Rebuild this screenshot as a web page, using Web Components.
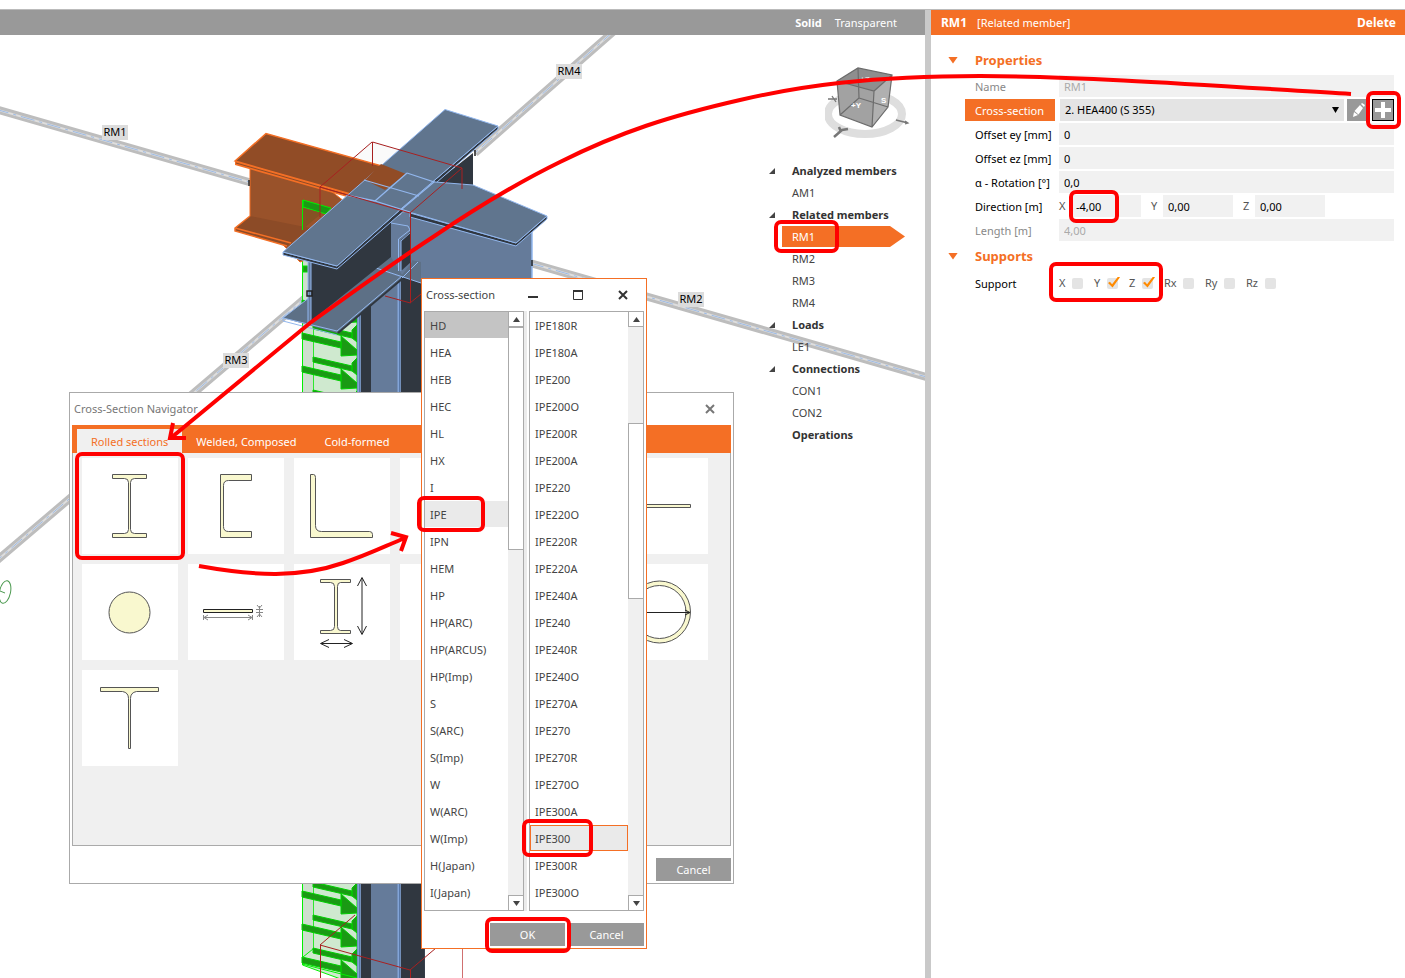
<!DOCTYPE html>
<html lang="en">
<head>
<meta charset="utf-8">
<title>Connection designer</title>
<style>
html,body{height:100%}
body{margin:0;background:#fff;color:#444;font:11px/16px "Noto Sans","Open Sans",sans-serif}
</style>
</head>
<body>
<app-shell></app-shell>

<template id="t-app-shell">
<style>
:host{display:flex;flex-direction:column;min-height:100vh;box-sizing:border-box;padding-top:9px;position:relative;overflow:hidden}
.columns{flex:1;display:grid;grid-template-columns:minmax(0,1fr) 474px;border-top:1px solid #bbb}
.left{display:flex;flex-direction:column;border-right:6px solid #c9c9c9;min-width:0}
.stage{flex:1;position:relative;overflow:hidden}
.side{position:absolute;top:25px;right:14px;display:flex;flex-direction:column;align-items:flex-end;gap:20px}
scene-view{position:absolute;inset:0}
.nav{position:absolute;left:69px;top:357px}
.pick{position:absolute;left:421px;top:243px}
mark-layer{position:absolute;inset:0}
</style>
<div class="columns">
  <main class="left">
    <view-bar></view-bar>
    <div class="stage">
      <scene-view></scene-view>
      <div class="side"><view-cube></view-cube><member-tree></member-tree></div>
      <section-navigator class="nav"></section-navigator>
      <section-picker class="pick"></section-picker>
    </div>
  </main>
  <property-panel></property-panel>
</div>
<mark-layer></mark-layer>
</template>

<template id="t-view-bar">
<style>
:host{display:flex;align-items:center;justify-content:flex-end;gap:13px;height:25px;padding-right:28px;background:#999}
button{all:unset;color:#fff;font-size:11px;line-height:16px}
.on{font-weight:700}
</style>
<button class="on">Solid</button><button>Transparent</button>
</template>

<template id="t-scene-view">
<style>
:host{display:block;overflow:hidden}
svg{display:block;width:100%;height:100%}
span{position:absolute;width:26px;height:15px;background:#dcdcdc;color:#000;line-height:14px;text-align:center;font-size:11px}
</style>
<svg aria-hidden="true"><defs>
  <g id="load" stroke="#00d000" stroke-width="1">
    <path fill="#1a9a14" d="M313 357l39 9v5l-39-9zM352 363l5-5v17l-5-4z"/>
    <path fill="#1a9a14" d="M302 333l39 9v6l-39-9zM341 336l16 14v5l-16 1z"/>
  </g>
</defs>
<g transform="translate(0,-35)">
  <g stroke="#bdbdbd" stroke-width="8" fill="none">
    <path d="M-5 109L249 182M614 31L475 153M530 263L930 378M310 294L-5 562"/>
    <path stroke="#dedede" stroke-width="2" d="M-5 109L249 182M614 31L475 153M530 263L930 378M310 294L-5 562"/>
    <path stroke="#9dbbe6" stroke-width="1" stroke-dasharray="14 5 3 5" d="M-5 109L249 182M614 31L475 153M530 263L930 378M310 294L-5 562"/>
  </g>
  <path fill="#fafafa" d="M372 142L462 168V190L410 213 320 187z"/>
  <path fill="#cfe9cf" stroke="#00f000" d="M302.500 200L346 212 357 300V985L302.500 965z"/>
  <path fill="#cddfcd" d="M303 201h10v748l-10 8z"/><path stroke="#2ee82e" d="M313.500 300V949"/>
  <path fill="#1a9a14" stroke="#00e000" d="M303 266h6v6h-6z"/>
  <use href="#load"/><use href="#load" y="-33"/><use href="#load" y="33"/><use href="#load" y="525"/><use href="#load" y="558"/><use href="#load" y="591"/><use href="#load" y="624"/>
  <path fill="none" stroke="#00f000" d="M303 957l10-8M302 964l55 14"/>

  <path fill="#99522a" stroke="#f46f25" stroke-width="1" d="M250 168L330 190 380 230 300 262 283 245 250 216z"/>
  <path fill="#8c4b27" d="M250 216L235 228V231L287 246 310 228z"/>
  <path fill="none" stroke="#f46f25" stroke-width="1.500" d="M250 216L235 228V231L287 246M235 228L291 243"/>
  <path fill="#1a9a14" stroke="#00f000" d="M303 200L331 208 326 214 303 207z"/>
  <path fill="#855224" d="M303 208L322 213 303 229z"/><path stroke="#00f000" d="M302.500 200V230"/>
  <path fill="#f46f25" d="M235 161V165L375 205V201z"/>
  <path fill="#914c26" stroke="#f46f25" stroke-width="1.500" d="M235 161L266 133.500 407 173 375 201z"/>
  <path fill="none" stroke="#8c4b27" d="M236 163L372 202"/>

  <path fill="#303740" d="M435 183L473 153V186L466 190 410 230z"/>
  <path fill="#657b9a" d="M402 212L532 228V300H376V262z"/>
  <path stroke="#92b7ee" stroke-width="1.500" d="M532 228V300"/>
  <path fill="#657b9a" d="M357 310L371 295H425V985H357z"/>
  <path fill="#303740" d="M361 300h10v685h-10zM401 276l20 7 4 702h-24z"/>
  <path stroke="#82a4d8" stroke-width="3" d="M359 315V985M399 280V985"/><path stroke="#5878a8" d="M359.500 315V985M399.500 280V985"/>
  <path fill="#5d7086" d="M283 318L310 297 376 268 402 278 337 333z"/>
  <path fill="#5d7086" d="M376 268L391 256 421 262V283z"/>
  <path stroke="#92b7ee" fill="none" d="M376 268L421 283M402 278L418 262M310 297L283 318 337 331 402 276"/>
  <path stroke="#303740" stroke-width="2" d="M338 333L402 279"/>
  <path stroke="#92b7ee" fill="none" d="M283 318V321L337 335"/>
  <path fill="#303740" d="M311 262L391 220V257L311 321z"/>
  <path fill="#657b9a" stroke="#92b7ee" d="M308 258h3v66h-3z"/>
  <path fill="#657b9a" d="M391 220L412 208V262L402 275 391 257z"/>
  <path fill="#303740" d="M401 240L411 231V262L401 271z"/>
  <path fill="none" stroke="#92b7ee" d="M398.500 271V239L410 230 408 226 391 223M401 271V241L411 232"/>

  <path fill="#303740" stroke="#92b7ee" d="M410 213L516 243 547 216V219L516 246 410 217zM283 252L337 266 402 208 498 126V129L337 269 283 255z"/>
  <path fill="#60758e" stroke="#92b7ee" d="M407 173L435 182 473 185 547 216 516 243 402 210 375 201z"/>
  <path fill="#60758e" stroke="#92b7ee" d="M283 252L445 109.500 498 126 402 208 337 266z"/>
  <path fill="#914c26" d="M365 180L381 164 406 174 385 190z"/>
  <path stroke="#92b7ee" stroke-width="1.300" fill="none" d="M364 180L419 196M407 173L375 201 410 212M407 173L434 182 402 209M346 195L375 201"/>
  <path fill="none" stroke="#222" stroke-width="1.500" d="M249 180v6M475 150v6M532 260v6M307 291h5v5h-5z"/>
  <g fill="none" stroke="#a82020"><path d="M372.500 166V142L462 168V189M372 142L320 187V217M320 187L410 213 462 168M410.500 213V303L385 296M410 303L421 294"/>
  <path d="M355 915L320 945 410 970 436 948M320.500 945V985M410.500 970V985" /><path stroke="#d07070" d="M462.500 940V985"/></g>
  <ellipse cx="5" cy="592" rx="5.500" ry="11.500" transform="rotate(12 5 592)" fill="none" stroke="#4c9a50"/><path stroke="#4c9a50" d="M0 591l5 2"/>
</g></svg>
<span style="left:102px;top:90px">RM1</span><span style="left:556px;top:29px">RM4</span><span style="left:678px;top:257px">RM2</span><span style="left:223px;top:318px">RM3</span>
</template>

<template id="t-view-cube">
<style>:host{display:block}svg{display:block}text{font:700 8px "Liberation Sans",sans-serif}</style>
<svg width="86" height="80" viewBox="825 60 86 80" role="img" aria-label="View orientation">
  <ellipse cx="865" cy="114" rx="37" ry="20" fill="none" stroke="#dedede" stroke-width="8"/>
  <path fill="#a2a2a2" d="M837 81L858 68 892 75 888 107 872 127 840 115z"/>
  <path fill="#8e8e8e" d="M837 81L858 68 892 75 874 91z"/>
  <path fill="#b0b0b0" d="M874 91L892 75 888 107 872 127z"/>
  <path fill="none" stroke="#6c6c6c" stroke-width="1.200" d="M837 81L858 68 892 75 888 107 872 127 840 115zL874 91 892 75M874 91L872 127M858 68L859 98 840 115M859 98L888 107"/>
  <text x="851" y="108" fill="#fff">+Y</text><text x="881" y="103" fill="#fff">S</text><text x="860" y="82" fill="#ddd">+Z</text>
  <path fill="none" stroke="#777" stroke-width="1.300" d="M896 120l12 3M905 121l3 2-3 1M828 99h9M832 96l4 6"/>
  <path fill="none" stroke="#777" stroke-width="2.500" d="M834 137l8-7 6-1M839 127l2 5"/>
</svg>
</template>

<template id="t-member-tree">
<style>
:host{display:block;width:142px}
ul{list-style:none;margin:0;padding:0}
li{display:grid;grid-template-columns:23px 1fr;align-items:center;height:22px}
i{width:6px;height:6px;background:#444;clip-path:polygon(100% 0,100% 100%,0 100%)}
a{grid-column:2;color:#444;text-decoration:none}
b{grid-column:2;color:#333}
.sel{padding-left:13px;display:block}
.sel a{display:block;width:113px;height:21px;line-height:21px;padding-left:10px;color:#fff;background:#f46f25;clip-path:polygon(0 0,108px 0,100% 50%,108px 100%,0 100%)}
</style>
<ul>
<li><i></i><b>Analyzed members</b></li><li><a href="#am1">AM1</a></li>
<li><i></i><b>Related members</b></li><li class="sel"><a href="#rm1">RM1</a></li><li><a href="#rm2">RM2</a></li><li><a href="#rm3">RM3</a></li><li><a href="#rm4">RM4</a></li>
<li><i></i><b>Loads</b></li><li><a href="#le1">LE1</a></li>
<li><i></i><b>Connections</b></li><li><a href="#con1">CON1</a></li><li><a href="#con2">CON2</a></li>
<li><b>Operations</b></li>
</ul>
</template>

<template id="t-section-navigator">
<style>
:host{display:block;box-sizing:border-box;width:665px;border:1px solid #aaa;background:#fff;padding:0 2px 2px}
header{display:flex;align-items:center;justify-content:space-between;height:32px;padding-left:2px;color:#777}
h2{margin:0;font:inherit}
header button{all:unset;display:grid;place-items:center;width:43px;height:30px}
.tabs{display:flex;align-items:flex-end;height:28px;padding-left:5px;background:#f46f25}
.tabs button{all:unset;height:24px;line-height:25px;padding:0 14px;color:#fff}
.tabs .on{background:#f0f0f0;color:#f46f25}
.tiles{display:grid;grid-template-columns:repeat(auto-fill,96px);grid-auto-rows:96px;align-content:start;gap:10px;min-height:387px;padding:5px 9px 0;background:#f0f0f0;border:1px solid #aaa;border-top:0}
.tiles button{all:unset;background:#fff}
.tiles svg{display:block;fill:#f9f8cf;stroke:#555;stroke-width:1}
footer{display:flex;justify-content:flex-end;padding-top:12px}
</style>
<header><h2>Cross-Section Navigator</h2><button aria-label="Close"><svg width="12" height="12"><path d="M2 2l8 8M10 2L2 10" stroke="#777" stroke-width="2"/></svg></button></header>
<div class="tabs" role="tablist"><button class="on" role="tab">Rolled sections</button><button role="tab">Welded, Composed</button><button role="tab">Cold-formed</button></div>
<div class="tiles">
<button aria-label="I section"><svg width="96" height="96"><path d="M30.500 16.500h34v4h-12q-4 0-4 4v47q0 4 4 4h12v4h-34v-4h12q4 0 4-4v-47q0-4-4-4h-12z"/></svg></button>
<button aria-label="Channel"><svg width="96" height="96"><path d="M32.500 16.500h31v6h-23q-5 0-5 5v41q0 5 5 5h23v6h-31z"/></svg></button>
<button aria-label="Angle"><svg width="96" height="96"><path d="M16.500 16.500h3q2 0 2 3v48q0 6 6 6h48q3 0 3 3v3h-62z"/></svg></button>
<button aria-label="Hollow section"></button><button aria-label="Pipe"></button>
<button aria-label="Flat bar"><svg width="96" height="96"><path d="M17.500 46.500h61v3h-61z"/></svg></button>
<button aria-label="Round bar"><svg width="96" height="96"><circle cx="47.500" cy="48.500" r="20.500"/></svg></button>
<button aria-label="Plate"><svg width="96" height="96"><path stroke="#222" d="M15.500 45.500h49v3h-49z"/><path fill="none" stroke="#888" d="M15.500 51v5M64.500 51v5M16 53.500h48M20 51l-4 2.500 4 2.500M60 51l4 2.500-4 2.500M68 45.500h7M68 48.500h7M71.500 42v11M69 41l2.500 3 2.500-3M69 53l2.500-3 2.500 3"/></svg></button>
<button aria-label="Parametric I section"><svg width="96" height="96"><path d="M26.500 15.500h30v3h-10q-3 0-3 4v40q0 4 3 4h10v3h-30v-3h10q4 0 4-4v-40q0-4-4-4h-10z"/><path fill="none" stroke="#222" d="M68 14v56M63.500 22L68 13.500 72.500 22M63.500 62L68 70.500 72.500 62M27 79.500h31M35 75.500l-8.500 4 8.500 4M50 75.500l8.500 4-8.500 4"/></svg></button>
<button aria-label="Parametric channel"></button><button aria-label="Parametric box"></button>
<button aria-label="Parametric pipe"><svg width="96" height="96"><circle cx="47.500" cy="48" r="31"/><circle cx="47.500" cy="48" r="26.500" fill="#fff"/><path fill="none" stroke="#222" d="M18 48.500h60M73 46l5 2.500-5 2.500"/></svg></button>
<button aria-label="T section"><svg width="96" height="96"><path d="M18.500 17.500h58v4h-22q-6 1-6 7v50h-2v-50q0-6-6-7h-22z"/></svg></button>
</div>
<footer><flat-button>Cancel</flat-button></footer>
</template>

<template id="t-flat-button">
<style>
:host{display:block}
button{display:block;width:75px;height:23px;margin:0;border:0;padding:0;background:#999;color:#fff;font:inherit;line-height:23px}
</style>
<button><slot></slot></button>
</template>

<template id="t-section-picker">
<style>
:host{display:block;box-sizing:border-box;width:226px;border:1px solid #f46f25;background:#fff;padding:0 2px 2px}
header{display:flex;align-items:center;height:32px;padding-left:2px;margin-right:-1px}
h2{flex:1;margin:0;font:inherit}
header button{all:unset;display:grid;place-items:center;width:45px;height:30px}
svg{fill:none;stroke:#333}
.lists{display:grid;grid-template-columns:100px 3px 115px;column-gap:0}
.lists i{background:#ebebeb}
.lists section-list:last-child{margin-left:2px;margin-right:-2px}
footer{display:flex;justify-content:flex-end;gap:4px;padding-top:12px}
</style>
<header><h2>Cross-section</h2>
<button aria-label="Minimize"><svg width="12" height="12"><path d="M1 8h10" stroke-width="2"/></svg></button>
<button aria-label="Maximize"><svg width="12" height="12"><path d="M1.500 1.500h9v9h-9z"/><path d="M1 2h10" stroke-width="2"/></svg></button>
<button aria-label="Close"><svg width="12" height="12"><path d="M2 2l8 8M10 2L2 10" stroke-width="2"/></svg></button></header>
<div class="lists">
<section-list name="Family" items="HD|HEA|HEB|HEC|HL|HX|I|IPE|IPN|HEM|HP|HP(ARC)|HP(ARCUS)|HP(Imp)|S|S(ARC)|S(Imp)|W|W(ARC)|W(Imp)|H(Japan)|I(Japan)" current="HD" hover="IPE" before="0" thumb="223"></section-list>
<i></i>
<section-list name="Size" items="IPE180R|IPE180A|IPE200|IPE200O|IPE200R|IPE200A|IPE220|IPE220O|IPE220R|IPE220A|IPE240A|IPE240|IPE240R|IPE240O|IPE270A|IPE270|IPE270R|IPE270O|IPE300A|IPE300|IPE300R|IPE300O" chosen="IPE300" before="96" thumb="176"></section-list>
</div>
<footer><flat-button>OK</flat-button><flat-button>Cancel</flat-button></footer>
</template>

<template id="t-section-list">
<style>
:host{display:grid;grid-template-columns:1fr 15px;border:1px solid #aaa;background:#fff}
ul{list-style:none;margin:0;padding:0 0 4px}
li{box-sizing:border-box;height:26px;margin-bottom:1px;line-height:28px;padding-left:5px}
.current{background:#c4c4c4}
.hover{background:#eaeaea}
.chosen{background:#eaeaea;box-shadow:inset 0 0 0 1px #f46f25}
.bar{display:flex;flex-direction:column;background:#f0f0f0}
button{all:unset;box-sizing:border-box;height:15px;display:grid;place-items:center;background:#fff;border-left:1px solid #aaa;border-bottom:1px solid #aaa}
button:last-child{border-bottom:0;border-top:1px solid #aaa;margin-top:auto}
.thumb{box-sizing:border-box;background:#fff;border:1px solid #aaa;border-right:0}
</style>
<ul role="listbox"></ul>
<div class="bar"><button aria-label="Scroll up"><svg width="7" height="5"><path d="M0 5L3.500 0 7 5z" fill="#444"/></svg></button><div class="before"></div><div class="thumb"></div><button aria-label="Scroll down"><svg width="7" height="5"><path d="M0 0h7L3.500 5z" fill="#444"/></svg></button></div>
</template>

<template id="t-property-panel">
<style>
:host{display:block;min-width:0;color:#000}
header{display:flex;align-items:center;gap:10px;height:25px;padding:0 9px 0 10px;background:#f46f25;color:#fff;font-size:12px}
header span{flex:1;font-size:11px}
header button{all:unset;font-weight:700}
.body{padding:10px 11px 0 17px}
h3{display:flex;align-items:center;gap:17px;height:30px;margin:0;color:#f46f25;font-size:13px;line-height:30px}
h3 i{width:10px;height:7px;background:#f46f25;clip-path:polygon(0 0,100% 0,50% 100%)}
.rows{display:grid;gap:2px;padding-left:17px}
.row{display:grid;grid-template-columns:90px minmax(0,1fr);column-gap:4px;min-height:22px;align-items:center}
.name{height:22px;line-height:24px;padding-left:10px;white-space:nowrap}
.dim .name{color:#888}
.active .name{background:#f46f25;color:#fff}
input:not([type=checkbox]),select{display:block;box-sizing:border-box;width:100%;min-width:0;height:22px;margin:0;border:0;border-radius:0;padding:0 5px;background:#f1f1f1;color:#000;font:inherit;appearance:none}
.dim input{color:#aaa}
.pick{display:flex;gap:3px;padding-left:1px}
.drop{flex:1;position:relative}
select{background:#e4e4e4}
.drop::after{content:"";position:absolute;right:5px;top:8px;width:7px;height:6px;background:#000;clip-path:polygon(0 0,100% 0,50% 100%);pointer-events:none}
.pick button{all:unset;box-sizing:border-box;width:22px;height:22px;background:#999;display:grid;place-items:center}
.pick .add{border:1px solid #000}
.vec{display:flex;gap:10px}
.vec label{display:grid;grid-template-columns:12px 70px;align-items:center;color:#555}
.checks{display:flex;gap:11px}
.checks label{display:grid;grid-template-columns:13px 11px;align-items:center;color:#555}
.checks .r{grid-template-columns:19px 11px}
.support{padding-top:1px}
input[type=checkbox]{appearance:none;position:relative;width:11px;height:11px;margin:0;background:#e4e4e4;border-radius:2px}
input:checked::after{content:"";position:absolute;left:1px;top:-1px;width:12px;height:11px;background:#ff8a00;clip-path:polygon(0 58%,16% 48%,34% 70%,84% 0,100% 6%,38% 100%)}
</style>
<header><b>RM1</b><span>[Related member]</span><button>Delete</button></header>
<div class="body">
<h3><i></i>Properties</h3>
<div class="rows">
<div class="row dim"><label class="name" for="n">Name</label><input id="n" value="RM1" disabled></div>
<div class="row active"><label class="name" for="cs">Cross-section</label><div class="pick"><div class="drop"><select id="cs"><option>2. HEA400 (S 355)</option></select></div>
<button aria-label="Edit"><svg width="18" height="18"><path fill="#fff" d="M4 16l1-5 4 3zM5.500 10L11 4l3 3-4.500 6.500zM12 3l1-1 3 2-1 2z"/></svg></button>
<button class="add" aria-label="Add"><svg width="18" height="18"><path stroke="#fff" stroke-width="4" d="M9 1v16M1 9h16"/></svg></button></div></div>
<div class="row"><label class="name" for="ey">Offset ey [mm]</label><input id="ey" value="0"></div>
<div class="row"><label class="name" for="ez">Offset ez [mm]</label><input id="ez" value="0"></div>
<div class="row"><label class="name" for="ro">α - Rotation [°]</label><input id="ro" value="0,0"></div>
<div class="row"><span class="name">Direction [m]</span><div class="vec"><label>X<input value="-4,00"></label><label>Y<input value="0,00"></label><label>Z<input value="0,00"></label></div></div>
<div class="row dim"><label class="name" for="le">Length [m]</label><input id="le" value="4,00" disabled></div>
</div>
<h3><i></i>Supports</h3>
<div class="rows support">
<div class="row"><span class="name">Support</span><div class="checks"><label>X<input type="checkbox"></label><label>Y<input type="checkbox" checked></label><label>Z<input type="checkbox" checked></label><label class="r">Rx<input type="checkbox"></label><label class="r">Ry<input type="checkbox"></label><label class="r">Rz<input type="checkbox"></label></div></div>
</div>
</div>
</template>

<template id="t-mark-layer">
<style>:host{display:block;pointer-events:none;overflow:hidden}svg{display:block;width:100%;height:100%;fill:none;stroke:#f00;stroke-width:4}</style>
<svg aria-hidden="true">
<path d="M1351 94C1220 86 1080 76 980 76C870 76 800 86 740 100C670 116 620 132 560 162C515 184 470 212 433 237C390 265 350 294 310 323L172 437"/>
<path d="M173 423L170 438 186 438"/>
<path d="M199 566C255 576 300 578 343 563C370 554 385 546 405 538M391 533L406 537 401 551"/>
<rect x="1368" y="93" width="31" height="34" rx="5"/>
<rect x="1071" y="192" width="46" height="29" rx="5"/>
<rect x="1051" y="264" width="110" height="36" rx="5"/>
<rect x="776" y="222" width="61" height="29" rx="5"/>
<rect x="77" y="454" width="106" height="104" rx="5"/>
<rect x="419" y="498" width="64" height="32" rx="5"/>
<rect x="524" y="821" width="67" height="34" rx="5"/>
<rect x="487" y="919" width="82" height="32" rx="5"/>
</svg>
</template>

<script>
class TemplateElement extends HTMLElement{
  constructor(){
    super();
    const t=document.getElementById("t-"+this.localName);
    this.attachShadow({mode:"open"}).append(t.content.cloneNode(true));
  }
}
class SectionList extends TemplateElement{
  connectedCallback(){
    const ul=this.shadowRoot.querySelector("ul");
    ul.setAttribute("aria-label",this.getAttribute("name"));
    ul.replaceChildren(...this.getAttribute("items").split("|").map(text=>{
      const li=document.createElement("li");
      li.setAttribute("role","option");
      li.textContent=text;
      for(const k of ["current","hover","chosen"])if(this.getAttribute(k)===text)li.className=k;
      return li;
    }));
    this.shadowRoot.querySelector(".before").style.height=this.getAttribute("before")+"px";
    this.shadowRoot.querySelector(".thumb").style.height=this.getAttribute("thumb")+"px";
  }
}
customElements.define("section-list",SectionList);
for(const n of ["flat-button","view-bar","scene-view","view-cube","member-tree","section-navigator","section-picker","property-panel","mark-layer","app-shell"])
  customElements.define(n,class extends TemplateElement{});
</script>
</body>
</html>
